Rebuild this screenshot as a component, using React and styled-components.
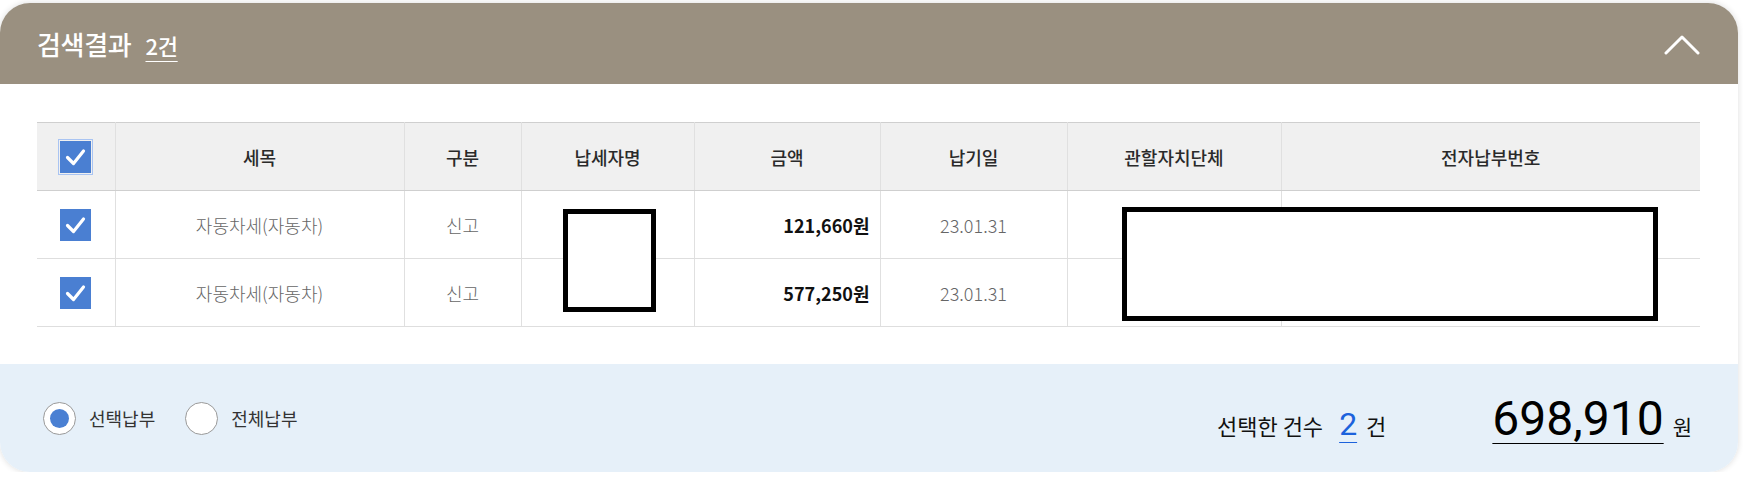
import React from 'react';
import styled, { createGlobalStyle } from 'styled-components';

const GlobalStyle = createGlobalStyle`
  body {
    margin: 0;
    background: #fff;
    font-family: "Noto Sans CJK KR", "Noto Sans", sans-serif;
    color: #222;
  }
`;

const rows = [
  { name: '자동차세(자동차)', kind: '신고', amount: '121,660원', due: '23.01.31' },
  { name: '자동차세(자동차)', kind: '신고', amount: '577,250원', due: '23.01.31' },
];

const columns = [78, 289, 117, 173, 186, 187, 214, 419];

const CheckIcon = () => (
  <svg width="31" height="32" viewBox="0 0 31 32">
    <polyline points="7.5,16.5 13.5,22.5 23.5,10" fill="none" stroke="#fff" strokeWidth="3.2" strokeLinecap="round" strokeLinejoin="round" />
  </svg>
);

const ChevronUp = () => (
  <svg width="36" height="22" viewBox="0 0 36 22">
    <polyline points="2,19 18,3 34,19" fill="none" stroke="#fff" strokeWidth="3" strokeLinecap="round" strokeLinejoin="round" />
  </svg>
);

const SearchResult = () => {
  return (
    <Page>
      <GlobalStyle />
      <Card>
        <Header>
          <Title>
            검색결과 <Count>2건</Count>
          </Title>
          <ToggleButton aria-label="접기">
            <ChevronUp />
          </ToggleButton>
        </Header>

        <Body>
          <TableWrap>
            <Table>
              <colgroup>
                {columns.map((w, i) => (
                  <col key={i} style={{ width: w }} />
                ))}
              </colgroup>
              <thead>
                <tr>
                  <Th>
                    <CheckBox focused>
                      <CheckIcon />
                    </CheckBox>
                  </Th>
                  <Th>세목</Th>
                  <Th>구분</Th>
                  <Th>납세자명</Th>
                  <Th>금액</Th>
                  <Th>납기일</Th>
                  <Th>관할자치단체</Th>
                  <Th>전자납부번호</Th>
                </tr>
              </thead>
              <tbody>
                {rows.map((r, i) => (
                  <tr key={i}>
                    <Td>
                      <CheckBox>
                        <CheckIcon />
                      </CheckBox>
                    </Td>
                    <Td>{r.name}</Td>
                    <Td>{r.kind}</Td>
                    <Td />
                    <Td align="right" strong>{r.amount}</Td>
                    <Td>{r.due}</Td>
                    <Td />
                    <Td />
                  </tr>
                ))}
              </tbody>
            </Table>
            <Redacted left={526} top={87} width={93} height={103} />
            <Redacted left={1085} top={85} width={536} height={114} />
          </TableWrap>
        </Body>

        <Footer>
          <RadioGroup>
            <RadioLabel>
              <Radio checked />
              선택납부
            </RadioLabel>
            <RadioLabel>
              <Radio />
              전체납부
            </RadioLabel>
          </RadioGroup>
          <Summary>
            <SummaryText>선택한 건수</SummaryText>
            <SelectedCount>2</SelectedCount>
            <SummaryText>건</SummaryText>
            <Total>698,910</Total>
            <Won>원</Won>
          </Summary>
        </Footer>
      </Card>
    </Page>
  );
};

const Page = styled.div`
  padding-top: 3px;
`;

const Card = styled.div`
  width: 1738px;
  border-radius: 30px;
  overflow: hidden;
  background: #fff;
  box-shadow: 0 0 6px rgba(0, 0, 0, 0.14);
`;

const Header = styled.div`
  height: 81px;
  background: #9a9080;
  display: flex;
  align-items: center;
  justify-content: space-between;
  padding: 0 38px 0 37px;
  box-sizing: border-box;
`;

const Title = styled.h2`
  margin: 0;
  color: #fff;
  font-size: 26px;
  font-weight: 500;
  letter-spacing: -0.3px;
  display: flex;
  align-items: baseline;
  gap: 14px;
`;

const Count = styled.span`
  font-size: 22px;
  text-decoration: underline;
  text-underline-offset: 6px;
  text-decoration-thickness: 1px;
`;

const ToggleButton = styled.button`
  border: 0;
  background: none;
  padding: 0;
  display: flex;
  cursor: pointer;
  margin-top: 2px;
`;

const Body = styled.div`
  padding: 38px 38px 37px 37px;
`;

const TableWrap = styled.div`
  position: relative;
`;

const Table = styled.table`
  width: 1663px;
  table-layout: fixed;
  border-collapse: collapse;
  border-top: 1px solid #cfcfcf;
`;

const Th = styled.th`
  height: 67px;
  padding: 0;
  background: #f0f0f0;
  border-bottom: 1px solid #cfcfcf;
  border-left: 1px solid #e0e0e0;
  font-size: 18px;
  font-weight: 500;
  color: #2a2a2a;
  text-align: center;
  vertical-align: middle;
  &:first-child {
    border-left: 0;
  }
`;

const Td = styled.td`
  height: 67px;
  padding: 0 10px;
  border-bottom: 1px solid #dedede;
  border-left: 1px solid #e0e0e0;
  font-size: 18px;
  font-weight: ${p => (p.strong ? 700 : 300)};
  color: ${p => (p.strong ? '#111' : '#666')};
  text-align: ${p => p.align || 'center'};
  vertical-align: middle;
  &:first-child {
    border-left: 0;
    padding: 0;
  }
`;

const CheckBox = styled.span`
  display: inline-flex;
  width: 31px;
  height: 32px;
  background: #4a7fd2;
  vertical-align: middle;
  outline: ${p => (p.focused ? '1px solid #a9c4f2' : 'none')};
  outline-offset: 1px;
`;

const Redacted = styled.div`
  position: absolute;
  left: ${p => p.left}px;
  top: ${p => p.top}px;
  width: ${p => p.width}px;
  height: ${p => p.height}px;
  border: 5px solid #000;
  background: #fff;
  box-sizing: border-box;
`;

const Footer = styled.div`
  height: 108px;
  background: #e6f0f9;
  display: flex;
  align-items: center;
  justify-content: space-between;
  padding: 0 46px 0 43px;
  box-sizing: border-box;
`;

const RadioGroup = styled.div`
  display: flex;
  align-items: center;
  gap: 30px;
`;

const RadioLabel = styled.label`
  display: flex;
  align-items: center;
  gap: 13px;
  font-size: 18px;
  color: #333;
`;

const Radio = styled.span`
  width: 33px;
  height: 33px;
  border-radius: 50%;
  border: 1px solid #999;
  background: #fff;
  box-sizing: border-box;
  display: flex;
  align-items: center;
  justify-content: center;
  &::after {
    content: '';
    width: 19px;
    height: 19px;
    border-radius: 50%;
    background: ${p => (p.checked ? '#4a80d3' : 'transparent')};
  }
`;

const Summary = styled.div`
  display: flex;
  align-items: baseline;
`;

const SummaryText = styled.span`
  font-size: 22px;
  color: #111;
  margin-left: 9px;
  &:first-child {
    margin-left: 0;
  }
`;

const SelectedCount = styled.span`
  font-family: Roboto, "Noto Sans", sans-serif;
  font-size: 32px;
  color: #1c62dc;
  margin-left: 16px;
  text-decoration: underline;
  text-underline-offset: 7px;
  text-decoration-thickness: 1px;
`;

const Total = styled.span`
  font-family: Roboto, "Noto Sans", sans-serif;
  font-size: 48px;
  color: #000;
  margin-left: 106px;
  text-decoration: underline;
  text-underline-offset: 8px;
  text-decoration-thickness: 1px;
`;

const Won = styled.span`
  font-size: 21px;
  color: #111;
  margin-left: 9px;
`;

export default SearchResult;
